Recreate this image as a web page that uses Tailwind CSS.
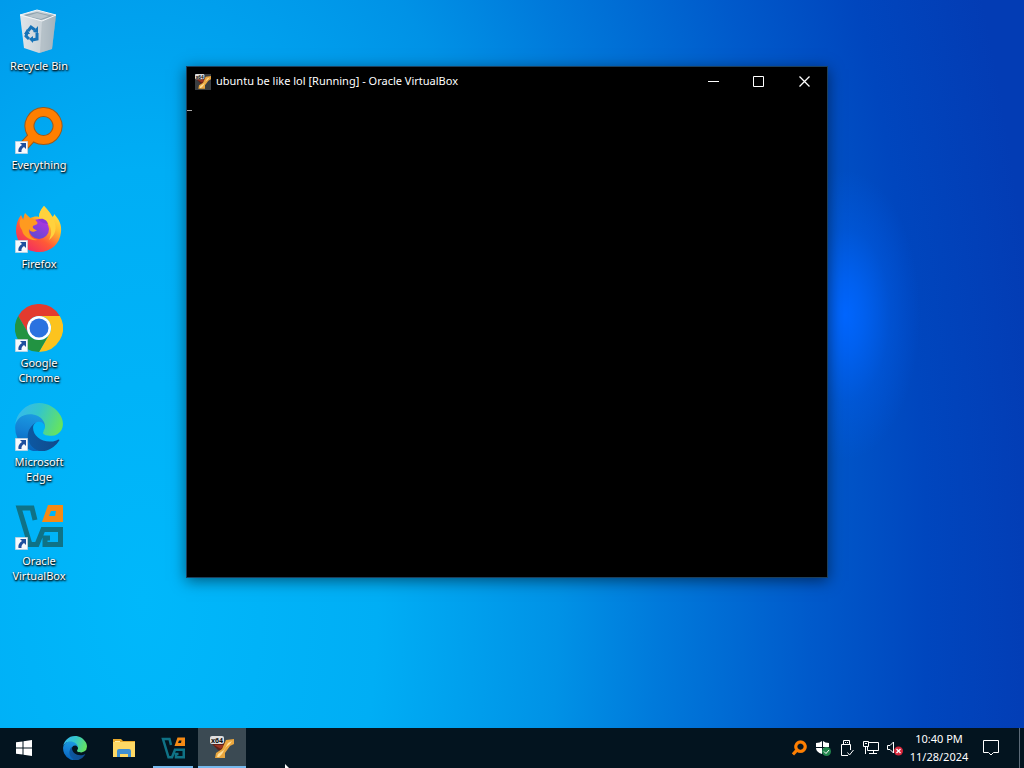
<!DOCTYPE html>
<html lang="en">
<head>
  <meta charset="UTF-8" />
  <meta name="viewport" content="width=device-width, initial-scale=1.0"/>
  <title>Desktop</title>
  <script src="https://cdn.jsdelivr.net/npm/@tailwindcss/browser@4"></script>
</head>
<body class="min-h-screen flex flex-col overflow-hidden font-['Noto_Sans','Open_Sans',sans-serif] text-[11px] text-white bg-[radial-gradient(ellipse_88%_215%_at_14%_78%,#00b8fb_0%,#00aef5_26%,#0092e6_46%,#007adb_57%,#005acb_74%,#0046be_87%,#033cb4_100%)]">

  <!-- Shared icons -->
  <svg class="absolute w-0 h-0" aria-hidden="true">
    <defs>
      <linearGradient id="edge-dark" x1="0" y1="0" x2="1" y2="0"><stop offset="0" stop-color="#0c59a4"/><stop offset="1" stop-color="#114a8b"/></linearGradient>
      <linearGradient id="edge-mid" x1="0.6" y1="0" x2="0.4" y2="1"><stop offset="0" stop-color="#1b9de2"/><stop offset="0.5" stop-color="#1480d4"/><stop offset="1" stop-color="#0560b8"/></linearGradient>
      <linearGradient id="edge-top" x1="0" y1="0.3" x2="1" y2="0.6"><stop offset="0" stop-color="#35b8f1"/><stop offset="0.45" stop-color="#34c6ca"/><stop offset="1" stop-color="#66e45e"/></linearGradient>
      <linearGradient id="fox" x1="0.9" y1="0" x2="0.2" y2="1"><stop offset="0" stop-color="#fff44f"/><stop offset="0.35" stop-color="#ffbd2e"/><stop offset="0.65" stop-color="#ff5a36"/><stop offset="1" stop-color="#f0246a"/></linearGradient>
      <linearGradient id="fox-globe" x1="0.8" y1="0" x2="0.2" y2="1"><stop offset="0" stop-color="#b833e1"/><stop offset="1" stop-color="#5a4bd0"/></linearGradient>
      <linearGradient id="bin" x1="0" y1="0" x2="1" y2="0"><stop offset="0" stop-color="#dfe5e9"/><stop offset="0.65" stop-color="#c8d1d7"/><stop offset="1" stop-color="#9fb0bb"/></linearGradient>
    </defs>
    <symbol id="edge" viewBox="4 0 257 257">
      <path fill="url(#edge-dark)" d="M235.680 195.460a93.730 93.730 0 0 1-10.540 4.710 101.870 101.870 0 0 1-35.900 6.460c-47.320 0-88.540-32.550-88.540-74.320A31.480 31.480 0 0 1 117.130 105c-42.800 1.800-53.800 46.400-53.800 72.530 0 73.880 68.090 81.370 82.760 81.370 7.910 0 19.840-2.300 27-4.560l1.310-.44a128.340 128.340 0 0 0 66.600-52.800 4 4 0 0 0-5.320-5.640Z"/>
      <path fill="url(#edge-mid)" d="M110.340 246.340A79.200 79.200 0 0 1 87.600 225a80.720 80.720 0 0 1 29.530-120c3.120-1.470 8.450-4.130 15.540-4a32.350 32.350 0 0 1 25.690 13 31.880 31.880 0 0 1 6.360 18.660c0-.21 24.460-79.600-80-79.600-43.900 0-80 41.660-80 78.210a130.150 130.150 0 0 0 12.110 56 128 128 0 0 0 156.380 67.110 75.550 75.550 0 0 1-62.780-8Z"/>
      <path fill="url(#edge-top)" d="M156.940 153.780c-.81 1.050-3.300 2.500-3.300 5.660 0 2.610 1.700 5.120 4.720 7.230 14.380 10 41.490 8.680 41.560 8.680a59.560 59.560 0 0 0 30.270-8.350 61.380 61.380 0 0 0 30.430-52.880c.26-22.410-8-37.310-11.340-43.910C228.090 28.760 182.350 0 132.610 0a128 128 0 0 0-128 126.200c.48-36.540 36.800-66.050 80-66.050 3.500 0 23.460.34 42 10.070 16.340 8.580 24.900 18.940 30.850 29.210 6.180 10.670 7.280 24.150 7.280 29.520s-2.740 13.330-7.800 19.830Z"/>
    </symbol>
    <symbol id="vbox" viewBox="0 0 48 48">
      <path fill="none" stroke="#0f7286" stroke-width="5" d="M20 18L17 6H4L15 42.500H22L28 27.500H45.500V42.500H30V36H35"/>
      <path fill="#f68a14" fill-rule="evenodd" d="M33 3H48V20H27ZM36 9L34 14H40L41 9Z"/>
    </symbol>
    <symbol id="everything" viewBox="0 0 48 48">
      <path fill="none" stroke="#9a5a1c" stroke-width="10" d="M6 43L18 30M28 6a14 14 0 1 0 1 0Z"/>
      <path fill="none" stroke="#ff7f00" stroke-width="8" d="M6 43L18 30M28 6a14 14 0 1 0 1 0Z"/>
    </symbol>
    <symbol id="shortcut" viewBox="0 0 13 13">
      <path fill="#f7f9fc" stroke="#b9c4d4" stroke-width="0.600" d="M.3.3h12.400v12.400H.3Z"/>
      <path fill="#1e4f9e" d="M5 2H11V8L9 6Q6 8 6.500 11H3.500Q2.500 7 7 4Z"/>
    </symbol>
    <symbol id="machine" viewBox="0 0 24 24">
      <path fill="#5e2016" d="M2 8L17 6L12 16L8 14Z"/>
      <path fill="#9a3422" d="M4 9L14 9L11 13Z"/>
      <path fill="#e9a63e" d="M6 17L12 13L16 4L24 3L24 8L20 10L15 17V22H5Z"/>
      <path fill="#ffe09a" d="M8 18L14 14L18 7L22 5L20 8L16 11L12 18L9 21H7Z"/>
      <rect x="0" y="0" width="14" height="8" rx="2" fill="#dedede"/>
    </symbol>
  </svg>

  <main class="relative flex-1">
    <!-- Desktop icons -->
    <nav class="flex flex-col w-[78px] leading-[15px] text-center text-shadow-[1px_1px_2px_#000,0_1px_2px_#000]">
      <a href="#" class="h-[99px] pt-[7px] flex flex-col items-center gap-[3px]">
        <svg class="w-12 h-12" viewBox="0 0 48 48">
          <path fill="url(#bin)" d="M5 8L22 3L41 8L37 42L24 46L9 41Z"/>
          <path fill="#8fa3af" d="M8 8L22 5L38 9L26 13Z"/>
          <path fill="#b9c5cc" d="M12 9L22 6L34 9L26 12Z"/>
          <path fill="#a9b5be" opacity="0.600" d="M27 14L41 8L37 42L25 46Z"/>
          <path fill="none" stroke="#f3f6f8" stroke-width="1" d="M5 8L22 3L41 8L27 14Z"/>
          <path fill="none" stroke="#1673b8" stroke-width="3" d="M13 24L16 20L20 23M22 26L22 32L17 33M14 32L11 29L12 26"/>
          <path fill="#1673b8" d="M18 25L23 19V26ZM18 29V36L14 32ZM9 27L12 22L15 27Z"/>
        </svg>
        <span>Recycle Bin</span>
      </a>
      <a href="#" class="h-[99px] pt-[7px] flex flex-col items-center gap-[3px]">
        <span class="relative">
          <svg class="w-12 h-12"><use href="#everything"/></svg>
          <svg class="absolute left-0 bottom-0 w-[13px] h-[13px]"><use href="#shortcut"/></svg>
        </span>
        <span>Everything</span>
      </a>
      <a href="#" class="h-[99px] pt-[7px] flex flex-col items-center gap-[3px]">
        <span class="relative">
          <svg class="w-12 h-12" viewBox="0 0 48 48">
            <path fill="url(#fox)" d="M29 1C32 4 35 8 37 12C39 11 39 10 39 9C44 14 47 20 46 27C45 39 36 47 24 47C11 47 1 38 1 25C1 19 3 14 6 10L8 14C9 12 9 10 10 8L15 13C18 12 21 11 24 12C24 8 26 4 29 1Z"/>
            <circle cx="24" cy="24" r="10" fill="url(#fox-globe)"/>
            <path fill="#ff9a1f" d="M6 13L9 15L10 9L15 13C18 13 20 14 22 17C24 19 20 20 18 21C17 23 20 25 22 25C19 28 15 27 14 24C13 30 17 34 23 35C14 36 8 31 7 25C4 21 4 17 6 13Z"/>
            <path fill="#ffd23d" d="M29 1C34 6 38 11 40 18C42 26 39 31 34 35C37 29 37 23 33 18C29 15 25 14 24 12C24 8 26 4 29 1Z"/>
            <path fill="#8a35d8" d="M23 15C27 12 32 15 33 19L28 18Z"/>
          </svg>
          <svg class="absolute left-0 bottom-0 w-[13px] h-[13px]"><use href="#shortcut"/></svg>
        </span>
        <span>Firefox</span>
      </a>
      <a href="#" class="h-[99px] pt-[7px] flex flex-col items-center gap-[3px]">
        <span class="relative">
          <svg class="w-12 h-12" viewBox="0 0 48 48">
            <path fill="#e33b2e" d="M24 12H44.800A24 24 0 0 0 3.200 12L13.600 30A12 12 0 0 1 24 12Z"/>
            <path fill="#fcc31e" d="M24 12H44.800A24 24 0 0 1 24 48L34.400 30A12 12 0 0 0 24 12Z"/>
            <path fill="#229342" d="M13.600 30L3.200 12A24 24 0 0 0 24 48L34.400 30A12 12 0 0 1 13.600 30Z"/>
            <circle cx="24" cy="24" r="12" fill="#fff"/>
            <circle cx="24" cy="24" r="9.500" fill="#2a72e0"/>
          </svg>
          <svg class="absolute left-0 bottom-0 w-[13px] h-[13px]"><use href="#shortcut"/></svg>
        </span>
        <span>Google<br>Chrome</span>
      </a>
      <a href="#" class="h-[99px] pt-[7px] flex flex-col items-center gap-[3px]">
        <span class="relative">
          <svg class="w-12 h-12"><use href="#edge"/></svg>
          <svg class="absolute left-0 bottom-0 w-[13px] h-[13px]"><use href="#shortcut"/></svg>
        </span>
        <span>Microsoft<br>Edge</span>
      </a>
      <a href="#" class="h-[99px] pt-[7px] flex flex-col items-center gap-[3px]">
        <span class="relative">
          <svg class="w-12 h-12"><use href="#vbox"/></svg>
          <svg class="absolute left-0 bottom-0 w-[13px] h-[13px]"><use href="#shortcut"/></svg>
        </span>
        <span>Oracle<br>VirtualBox</span>
      </a>
    </nav>

    <!-- Glow of the wallpaper's window light -->
    <div class="absolute left-[770px] top-[170px] w-[150px] h-[290px] bg-[radial-gradient(closest-side,#0066ff_0%,#0066ffbb_25%,#0066ff44_60%,#0066ff00_100%)]"></div>

    <!-- Virtual machine window -->
    <section class="absolute left-[186px] top-[66px] w-[642px] h-[512px] flex flex-col bg-black border border-[#1d3f5c] shadow-[0_3px_14px_rgba(0,0,0,0.5)]">
      <header class="flex items-center h-[29px] pl-2">
        <svg class="w-4 h-4 bg-[#3a3d40]" viewBox="0 0 24 24">
          <use href="#machine" width="24" height="24"/>
          <text x="7" y="7" font-size="7" font-weight="bold" text-anchor="middle" fill="#111">x64</text>
        </svg>
        <h1 class="pl-[5px] flex-1">ubuntu be like lol [Running] - Oracle VirtualBox</h1>
        <button class="w-[45px] h-full flex items-center justify-center" aria-label="Minimize">
          <svg class="w-[11px] h-[11px]" viewBox="0 0 11 11" stroke="#fff"><path d="M0 5.500h11"/></svg>
        </button>
        <button class="w-[45px] h-full flex items-center justify-center" aria-label="Maximize">
          <svg class="w-[11px] h-[11px]" viewBox="0 0 11 11" fill="none" stroke="#fff"><path d="M.5.5h10v10H.5Z"/></svg>
        </button>
        <button class="w-[46px] h-full flex items-center justify-center" aria-label="Close">
          <svg class="w-[11px] h-[11px]" viewBox="0 0 11 11" stroke="#fff" stroke-width="1.300"><path d="M.5.5l10 10M10.500.5l-10 10"/></svg>
        </button>
      </header>
      <div class="flex-1 pt-[14px]">
        <div class="w-[5px] h-px bg-[#aaa]"></div>
      </div>
    </section>
  </main>

  <!-- Taskbar -->
  <footer class="relative flex h-10 bg-[#03141f]">
    <button class="w-12 mr-[3px] flex items-center justify-center" aria-label="Start">
      <svg class="w-4 h-4" viewBox="0 0 16 16" fill="#fff"><path d="M0 2.300L6.500 1.400V7.500H0ZM7.500 1.200L16 0V7.500H7.500ZM0 8.500H6.500V14.600L0 13.700ZM7.500 8.500H16V16L7.500 14.800Z"/></svg>
    </button>
    <div class="flex gap-px">
      <button class="w-12 flex items-center justify-center" aria-label="Microsoft Edge">
        <svg class="w-6 h-6"><use href="#edge"/></svg>
      </button>
      <button class="w-12 flex items-center justify-center" aria-label="File Explorer">
        <svg class="w-6 h-6" viewBox="0 0 24 24">
          <path fill="#e8a92c" d="M1 3H9L11 5H23V8H1Z"/>
          <path fill="#ffd965" d="M1 6H23V21H1Z"/>
          <path fill="#fff0a8" d="M3 5H8V6H3Z"/>
          <path fill="#3f8fd2" d="M5 21V15Q5 13 7 13H17Q19 13 19 15V21H16V18H8V21Z"/>
        </svg>
      </button>
      <button class="w-12 flex flex-col items-center justify-end gap-1" aria-label="Oracle VirtualBox">
        <svg class="w-6 h-[26px]"><use href="#vbox"/></svg>
        <span class="w-10 h-[2px] mt-px bg-[#76b9ed]"></span>
      </button>
      <button class="w-12 flex flex-col items-center justify-end gap-1 bg-[#3b4a53]" aria-label="ubuntu be like lol">
        <svg class="w-6 h-[26px]" viewBox="0 0 24 24">
          <use href="#machine" width="24" height="24"/>
          <text x="7" y="7" font-size="7" font-weight="bold" text-anchor="middle" fill="#111">x64</text>
        </svg>
        <span class="w-12 h-[2px] mt-px bg-[#76b9ed]"></span>
      </button>
    </div>

    <!-- Tray -->
    <div class="flex ml-auto">
      <button class="w-6 flex items-center justify-center" aria-label="Everything">
        <svg class="w-4 h-4"><use href="#everything"/></svg>
      </button>
      <button class="w-6 flex items-center justify-center" aria-label="Windows Security">
        <svg class="w-4 h-4" viewBox="0 0 16 16">
          <path fill="#fff" d="M7 1V7H1V3Q5 3 7 1ZM8 1Q10 3 14 3V7H8ZM1 8H7V14Q1 12 1 8ZM8 8H14Q13 12 8 14Z"/>
          <circle cx="11.500" cy="11.500" r="4.500" fill="#23864e"/>
          <path fill="none" stroke="#fff" d="M9 11.500L11 13.500L14 10"/>
        </svg>
      </button>
      <button class="w-6 flex items-center justify-center" aria-label="Safely remove hardware">
        <svg class="w-4 h-4" viewBox="0 0 16 16" fill="none" stroke="#fff">
          <path d="M4.500 4.500V.5H10.500V4.500M2.500 15.500V4.500H11.500V10M2.500 15.500H9M6 2.500h1M8 2.500h1M8.500 12.500L10.500 15L14.500 10"/>
        </svg>
      </button>
      <button class="w-6 flex items-center justify-center" aria-label="Network">
        <svg class="w-4 h-4" viewBox="0 0 16 16" fill="none" stroke="#fff">
          <path d="M6 2.500H15.500V10.500H4.500V7M.5 1.500H5.500V6.500H.5ZM2.500 6.500V14M10.500 10.500V13.500M6 13.500H14M2 3.500H4"/>
        </svg>
      </button>
      <button class="w-6 flex items-center justify-center" aria-label="Volume muted">
        <svg class="w-4 h-4" viewBox="0 0 16 16">
          <path fill="none" stroke="#fff" d="M.5 5.500H3L6.500 2V13L3 9.500H.5Z"/>
          <circle cx="11.500" cy="11" r="4.500" fill="#d8273b"/>
          <path stroke="#fff" stroke-width="1.300" d="M9.500 9L13.500 13M13.500 9L9.500 13"/>
        </svg>
      </button>
      <time class="w-16 flex flex-col justify-center items-center leading-[18px]">
        <span>10:40 PM</span>
        <span>11/28/2024</span>
      </time>
      <button class="w-10 mr-2 flex items-center justify-center" aria-label="Notifications">
        <svg class="w-4 h-4" viewBox="0 0 16 16" fill="none" stroke="#fff"><path d="M.5.5H15.500V12.500H10.500L8 15L5.500 12.500H.5Z"/></svg>
      </button>
      <button class="w-[5px] border-l border-[#5d6b78]" aria-label="Show desktop"></button>
    </div>

    <!-- Mouse pointer -->
    <svg class="absolute left-[285px] bottom-0 w-[4px] h-[4px]" viewBox="0 0 4 4"><path fill="#fff" d="M0 0L4 4H0Z"/></svg>
  </footer>
</body>
</html>
